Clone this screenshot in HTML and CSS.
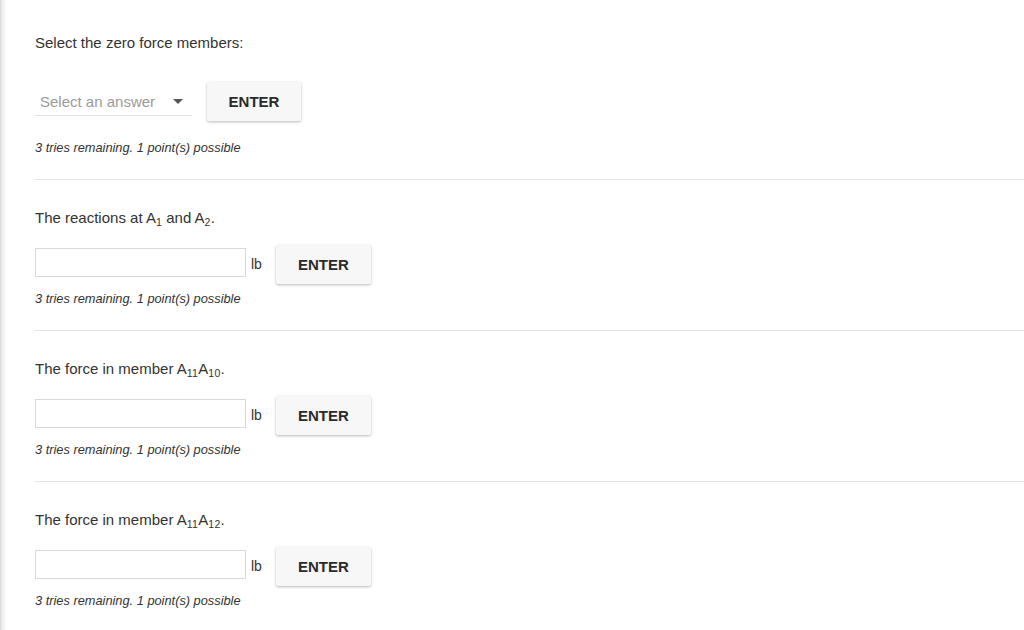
FILE: index.html
```html
<!DOCTYPE html>
<html>
<head>
<meta charset="utf-8">
<link rel="stylesheet" href="styles.css">
</head>
<body>
<div class="page">
  <div class="section first">
    <div class="prompt">Select the zero force members:</div>
    <div class="row">
      <div class="select"><span class="placeholder">Select an answer</span><span class="caret"></span></div>
      <button class="enter sel-enter">ENTER</button>
    </div>
    <div class="tries">3 tries remaining. 1 point(s) possible</div>
  </div>
  <div class="section">
    <div class="prompt">The reactions at A<sub>1</sub> and A<sub>2</sub>.</div>
    <div class="row">
      <div class="input"></div><span class="unit">lb</span>
      <button class="enter">ENTER</button>
    </div>
    <div class="tries">3 tries remaining. 1 point(s) possible</div>
  </div>
  <div class="section">
    <div class="prompt">The force in member A<sub>11</sub>A<sub>10</sub>.</div>
    <div class="row">
      <div class="input"></div><span class="unit">lb</span>
      <button class="enter">ENTER</button>
    </div>
    <div class="tries">3 tries remaining. 1 point(s) possible</div>
  </div>
  <div class="section last">
    <div class="prompt">The force in member A<sub>11</sub>A<sub>12</sub>.</div>
    <div class="row">
      <div class="input"></div><span class="unit">lb</span>
      <button class="enter">ENTER</button>
    </div>
    <div class="tries">3 tries remaining. 1 point(s) possible</div>
  </div>
</div>
</body>
</html>
```
FILE: styles.css
```css
html, body {
  margin: 0;
  padding: 0;
  background: #fff;
}
body {
  font-family: "Liberation Sans", Arial, sans-serif;
  color: #333;
}
.page {
  min-height: 630px;
  box-sizing: border-box;
  padding-left: 35px;
  background: linear-gradient(to right, #d6d6d6 0px, #ececec 2px, #fff 7px);
}
.section {
  padding: 28px 0 23px 0;
  border-bottom: 1px solid #e3e3e3;
}
.section.first {
  padding-top: 33px;
}
.section.last {
  border-bottom: none;
}
.prompt {
  font-size: 15px;
  line-height: 20px;
  color: #333;
}
.prompt sub {
  font-size: 10.5px;
  line-height: 0;
  vertical-align: -3px;
  letter-spacing: 0.3px;
}
.row {
  display: flex;
  align-items: flex-start;
  margin-top: 17px;
}
.first .row {
  margin-top: 29px;
}
.select {
  width: 157px;
  height: 34px;
  box-sizing: border-box;
  border-bottom: 1px solid #e0e0e0;
  display: flex;
  align-items: center;
  justify-content: space-between;
  padding: 6px 9px 0 5px;
}
.placeholder {
  font-size: 15px;
  color: #9a9a9a;
}
.caret {
  width: 0;
  height: 0;
  border-left: 5px solid transparent;
  border-right: 5px solid transparent;
  border-top: 5px solid #555;
}
.enter {
  width: 95px;
  height: 39px;
  border: none;
  border-radius: 2px;
  background: #f7f7f7;
  box-shadow: 0 1px 3px rgba(0, 0, 0, 0.28);
  font-family: "Liberation Sans", Arial, sans-serif;
  font-size: 15px;
  font-weight: bold;
  color: #2a2a2a;
  padding: 0;
  margin-left: 14px;
}
.sel-enter {
  margin-left: 15px;
  width: 94px;
}
.input {
  width: 211px;
  height: 29px;
  box-sizing: border-box;
  border: 1px solid #d9d9d9;
  margin-top: 3px;
}
.unit {
  font-size: 14px;
  margin-left: 5px;
  margin-top: 11px;
  line-height: 16px;
  color: #333;
}
.tries {
  margin-top: 7px;
  font-size: 12.8px;
  line-height: 16px;
  font-style: italic;
  color: #333;
}
.first .tries {
  margin-top: 19px;
}
```
